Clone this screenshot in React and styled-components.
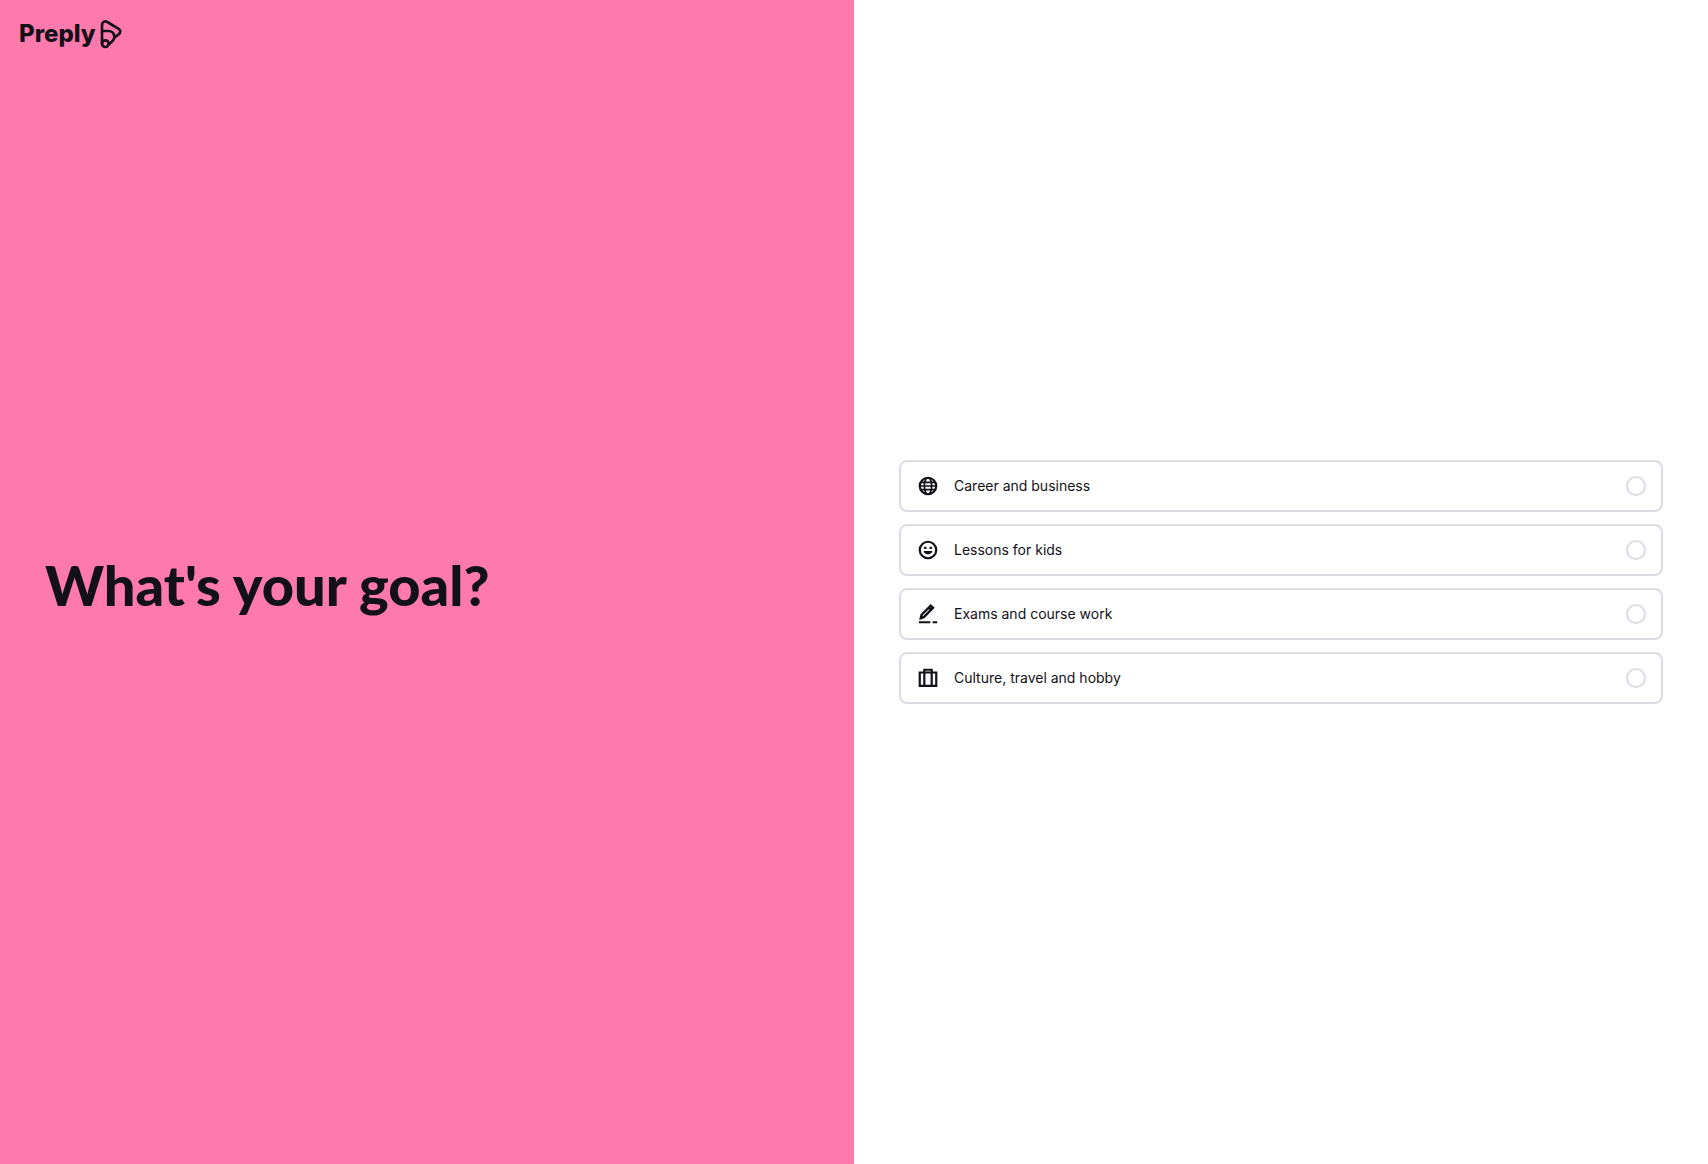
import React, { useState } from 'react';
import styled, { createGlobalStyle } from 'styled-components';

const goals = [
  { id: 'career', label: 'Career and business', Icon: GlobeIcon },
  { id: 'kids', label: 'Lessons for kids', Icon: SmileIcon },
  { id: 'exams', label: 'Exams and course work', Icon: PencilIcon },
  { id: 'culture', label: 'Culture, travel and hobby', Icon: LuggageIcon },
];

const App = () => {
  const [selected, setSelected] = useState('');

  return (
    <>
      <GlobalStyle />
      <StPage>
        <StIntro>
          <StHeader>
            <StLogo href="/">
              Preply
              <LogoMark />
            </StLogo>
          </StHeader>
          <StTitle id="goal-title">What's your goal?</StTitle>
        </StIntro>
        <StContent>
          <StGoalList role="radiogroup" aria-labelledby="goal-title">
            {goals.map(({ id, label, Icon }) => (
              <StGoal key={id} htmlFor={id}>
                <Icon />
                <span>{label}</span>
                <StRadio
                  type="radio"
                  id={id}
                  name="goal"
                  value={id}
                  checked={selected === id}
                  onChange={() => setSelected(id)}
                />
              </StGoal>
            ))}
          </StGoalList>
        </StContent>
      </StPage>
    </>
  );
};

function LogoMark() {
  return (
    <svg width="22" height="29" viewBox="0 0 66 87" fill="none" stroke="currentColor" strokeWidth="8" aria-hidden="true">
      <path d="M6 71V15C6 6 14 2 22 6L55 26C63 31 63 38 56 43L43 53C42 62 35 66 26 73" strokeLinejoin="round" />
      <path d="M6 33H26C38 33 44 42 43 54" />
      <circle cx="16" cy="71" r="10" />
    </svg>
  );
}

function GlobeIcon() {
  return (
    <StIcon viewBox="0 0 24 24" aria-hidden="true">
      <circle cx="12" cy="12" r="9" />
      <ellipse cx="12" cy="12" rx="4" ry="9" strokeWidth="1.800" />
      <path d="M3 12h18M4 8h16M4 16h16" strokeWidth="1.800" />
    </StIcon>
  );
}

function SmileIcon() {
  return (
    <StIcon viewBox="0 0 24 24" aria-hidden="true">
      <circle cx="12" cy="12" r="9" />
      <path d="M7.800 8.500h2.500V11H7.800zM13.700 8.500h2.500V11h-2.500zM7.200 13.200h9.600c-.5 2.300-2.400 3.600-4.800 3.600s-4.300-1.300-4.800-3.600z" fill="currentColor" stroke="none" />
    </StIcon>
  );
}

function PencilIcon() {
  return (
    <StIcon viewBox="0 0 24 24" aria-hidden="true">
      <path d="M4.200 16.500l.8-3.700L15 2.800l2.500 2.500L7.700 15.200zM12.800 5l2.500 2.500" strokeWidth="2.600" />
      <path d="M2 21h12.500M17 21h5" />
    </StIcon>
  );
}

function LuggageIcon() {
  return (
    <StIcon viewBox="0 0 24 24" aria-hidden="true">
      <path d="M3 6h18v14.500H3zM8 20V3h8v17" />
    </StIcon>
  );
}

const GlobalStyle = createGlobalStyle`
  * {
    box-sizing: border-box;
  }

  body {
    margin: 0;
    color: #121117;
    background-color: #fff;
    font-family: Inter, 'Liberation Sans', sans-serif;
  }
`;

const StPage = styled.main`
  display: grid;
  grid-template-columns: 1fr 1fr;
  min-height: 100vh;
`;

const StIntro = styled.section`
  display: grid;
  grid-template-rows: 1fr auto 1fr;
  background-color: #ff7aac;
`;

const StHeader = styled.header`
  padding: 16px 19px;
`;

const StLogo = styled.a`
  display: inline-flex;
  align-items: center;
  gap: 4px;
  color: inherit;
  font-size: 24px;
  font-weight: 800;
  line-height: 36px;
  text-decoration: none;
`;

const StTitle = styled.h1`
  margin: 0;
  padding: 6px 45px 0;
  font-family: Lato, 'Liberation Sans', sans-serif;
  font-size: 56px;
  font-weight: 900;
  line-height: 64px;
`;

const StContent = styled.section`
  display: flex;
  align-items: center;
  padding: 0 45px;
`;

const StGoalList = styled.div`
  display: flex;
  flex-direction: column;
  gap: 12px;
  width: 100%;
`;

const StGoal = styled.label`
  display: flex;
  align-items: center;
  gap: 15px;
  height: 52px;
  padding: 0 15px 0 16px;
  border: 2px solid #dcdce5;
  border-radius: 8px;
  font-size: 14px;
  line-height: 24px;
  cursor: pointer;

  &:hover {
    border-color: #121117;
  }
`;

const StIcon = styled.svg`
  flex-shrink: 0;
  width: 22px;
  height: 22px;
  fill: none;
  stroke: currentColor;
  stroke-width: 2.4;
`;

const StRadio = styled.input`
  appearance: none;
  width: 20px;
  height: 20px;
  margin: 0 0 0 auto;
  border: 2px solid #dcdce5;
  border-radius: 50%;
  background-color: #fff;
  cursor: pointer;

  &:checked {
    border: 6px solid #121117;
  }
`;

export default App;
